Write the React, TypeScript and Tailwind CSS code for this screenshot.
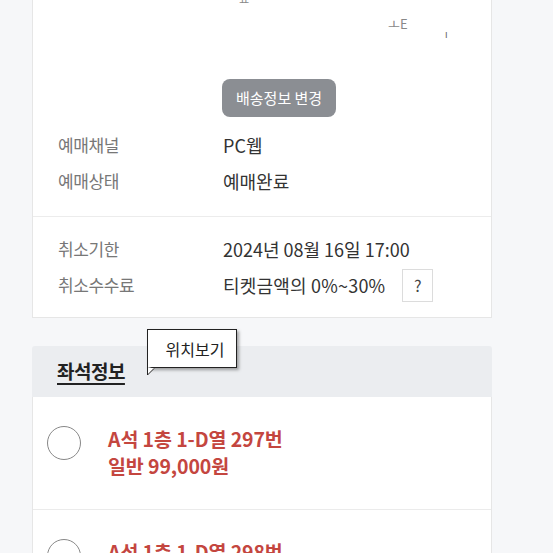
import React from 'react';

const font = { fontFamily: '"Noto Sans CJK KR", "Noto Sans", sans-serif' };

type Row = { label: string; value: React.ReactNode };

const InfoRow: React.FC<Row> = ({ label, value }) => (
  <div className="flex items-center h-9">
    <span className="w-[165px] text-[17px] text-[#777] tracking-[-0.4px]">{label}</span>
    <span className="text-[18px] text-[#333]">{value}</span>
  </div>
);

const SeatRow: React.FC<{ seat: string; price: string; last?: boolean }> = ({ seat, price, last }) => (
  <div className={`flex items-start pl-[14px] pt-[29px] ${last ? '' : 'pb-[30px] border-b border-[#ebebeb]'}`}>
    <span className="w-[34px] h-[34px] rounded-full border border-[#888] bg-white shrink-0" />
    <div className="ml-[27px] -mt-[1px] text-[19.5px] font-bold text-[#c4463f] leading-[27px] tracking-[-0.1px]">
      <div>{seat}</div>
      <div>{price}</div>
    </div>
  </div>
);

export default function App() {
  return (
    <div style={font} className="w-[553px] h-[553px] overflow-hidden bg-[#f6f7f9]">
      <div className="ml-[32px] w-[460px]">
        {/* 배송/예매 정보 카드 */}
        <div className="bg-white border-x border-b border-[#e6e6e6]">
          <div className="relative h-[79px]">
            <span className="absolute left-[206px] -top-[8px] text-[11px] text-[#888]">ㅛ</span>
            <span className="absolute left-[355px] top-[14px] text-[13px] text-[#888]">ㅗE</span>
            <span className="absolute left-[412px] top-[26px] text-[10px] text-[#666]">ı</span>
          </div>
          <div className="pl-[189px]">
            <button className="h-[38px] px-[14px] rounded-[8px] bg-[#8b8e93] text-white text-[15px]">
              배송정보 변경
            </button>
          </div>
          <div className="pl-[25px] pt-[10px] pb-[17px]">
            <InfoRow label="예매채널" value="PC웹" />
            <InfoRow label="예매상태" value="예매완료" />
          </div>
          <div className="border-t border-[#ececec] pl-[25px] pt-[14px] pb-[14px]">
            <InfoRow label="취소기한" value="2024년 08월 16일 17:00" />
            <InfoRow
              label="취소수수료"
              value={
                <span className="flex items-center tracking-[0.2px]">
                  티켓금액의 0%~30%
                  <span className="ml-[17px] w-[31px] h-[33px] border border-[#dcdcdc] flex items-center justify-center text-[16px] text-[#444]">?</span>
                </span>
              }
            />
          </div>
        </div>

        {/* 좌석정보 */}
        <div className="relative mt-[28px]">
          <div className="h-[51px] bg-[#ebedf0] rounded-t-[3px] flex items-center pl-[25px]">
            <span className="text-[19px] font-bold text-[#222] underline underline-offset-[4px] decoration-[1.5px] tracking-[-0.5px]">좌석정보</span>
          </div>
          <div className="absolute left-[115px] -top-[17px] w-[90px] h-[39px] bg-white border border-[#222] shadow-[2px_2px_3px_rgba(0,0,0,0.35)] flex items-center justify-center pl-[6px] text-[16px] text-[#222]">
            위치보기
            <svg className="absolute -left-[1px] top-[37px]" width="10" height="9" viewBox="0 0 10 9">
              <path d="M0.5 0 L0.5 8 L7 1.5" fill="white" stroke="#222" strokeWidth="1" />
            </svg>
          </div>
          <div className="bg-white border-x border-[#e6e6e6]">
            <SeatRow seat="A석 1층 1-D열 297번" price="일반 99,000원" />
            <SeatRow seat="A석 1층 1-D열 298번" price="일반 99,000원" last />
          </div>
        </div>
      </div>
    </div>
  );
}
